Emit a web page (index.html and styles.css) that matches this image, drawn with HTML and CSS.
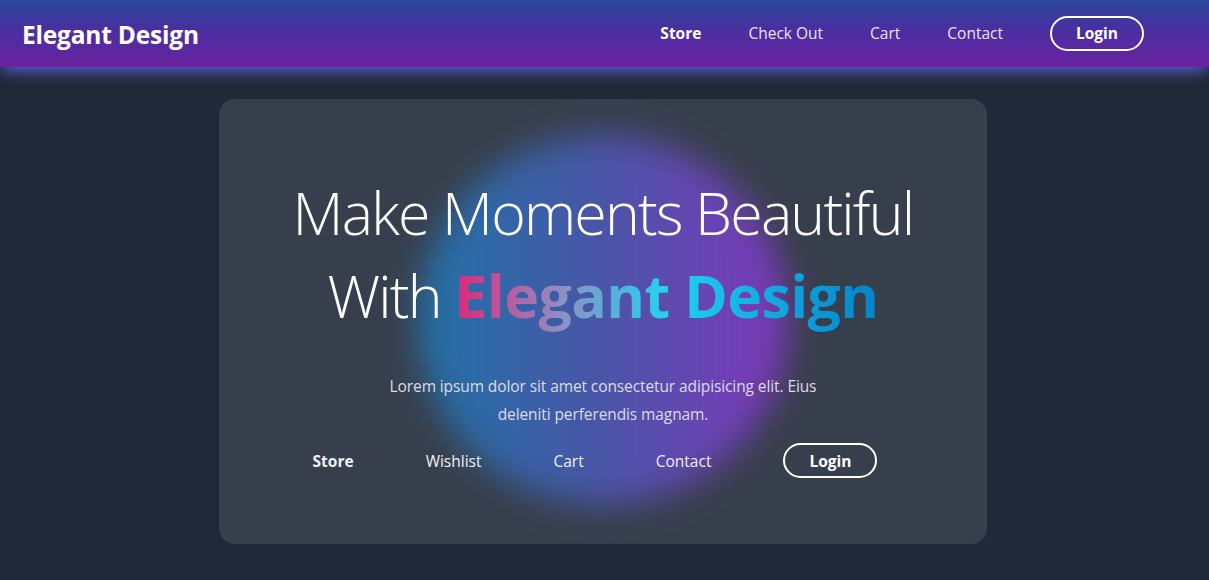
FILE: index.html
```html
<!DOCTYPE html>
<html lang="en">
<head>
<meta charset="utf-8">
<title>Elegant Design</title>
<link rel="stylesheet" href="styles.css">
</head>
<body>
<header class="topbar">
  <div class="brand">Elegant Design</div>
  <nav class="topnav">
    <a class="link active" href="#">Store</a>
    <a class="link" href="#">Check Out</a>
    <a class="link" href="#">Cart</a>
    <a class="link" href="#">Contact</a>
    <a class="btn-login" href="#">Login</a>
  </nav>
</header>
<main class="page">
  <section class="hero">
    <div class="blob"></div>
    <div class="hero-content">
      <h1 class="title">Make Moments Beautiful<br>With <span class="grad">Elegant Design</span></h1>
      <p class="lead">Lorem ipsum dolor sit amet consectetur adipisicing elit. Eius deleniti perferendis magnam.</p>
      <nav class="heronav">
        <a class="link active" href="#">Store</a>
        <a class="link" href="#">Wishlist</a>
        <a class="link" href="#">Cart</a>
        <a class="link" href="#">Contact</a>
        <a class="btn-login" href="#">Login</a>
      </nav>
    </div>
  </section>
</main>
</body>
</html>
```
FILE: styles.css
```css
* { box-sizing: border-box; }
html, body { margin: 0; padding: 0; }
body {
  background: #212837;
  font-family: "Open Sans", "Noto Sans", sans-serif;
  color: #fff;
  height: 580px;
  overflow: hidden;
}
a { text-decoration: none; color: inherit; }

.topbar {
  height: 67px;
  display: flex;
  align-items: center;
  justify-content: space-between;
  padding: 0 65px 1px 22px;
  background: linear-gradient(to bottom, #28489a 0%, #4a2ea0 45%, #6a22a0 100%);
  box-shadow: 0 6px 14px -2px rgba(99, 102, 241, 0.85);
  position: relative;
  z-index: 2;
}
.brand {
  font-size: 24.5px;
  font-weight: 700;
  letter-spacing: -0.2px;
  color: #fff;
  margin-top: 2px;
}
.topnav {
  display: flex;
  align-items: center;
  gap: 47px;
}
.link {
  font-size: 15.5px;
  color: #e9e4f2;
  letter-spacing: 0;
}
.link.active {
  font-weight: 700;
  color: #fff;
}
.btn-login {
  display: flex;
  align-items: center;
  justify-content: center;
  width: 94px;
  height: 35px;
  border: 2px solid #fff;
  border-radius: 18px;
  font-size: 15.5px;
  font-weight: 700;
  color: #fff;
}

.page {
  display: flex;
  justify-content: center;
  padding-top: 32px;
  padding-right: 3px;
}
.hero {
  position: relative;
  width: 768px;
  height: 445px;
  background: #383f4c;
  border-radius: 16px;
  overflow: hidden;
}
.blob {
  position: absolute;
  left: 199px;
  top: 36px;
  width: 370px;
  height: 370px;
  border-radius: 50%;
  background: linear-gradient(to right, #2173a8 0%, #4558a6 45%, #7f37bb 100%);
  filter: blur(17px);
}
.hero-content {
  position: relative;
  display: flex;
  flex-direction: column;
  align-items: center;
  padding-top: 72px;
}
.title {
  margin: 0;
  font-size: 59px;
  font-weight: 300;
  line-height: 83px;
  letter-spacing: -1.8px;
  text-align: center;
  color: #fff;
}
.grad {
  font-weight: 700;
  letter-spacing: -0.6px;
  background: linear-gradient(to right, #e0267a 0%, #8f8ec4 25%, #22d3ee 50%, #12a9e0 75%, #0282c8 100%);
  -webkit-background-clip: text;
  background-clip: text;
  color: transparent;
}
.lead {
  margin: 35px 0 0;
  max-width: 440px;
  font-size: 15.5px;
  line-height: 28px;
  text-align: center;
  color: #dcdbe6;
  letter-spacing: -0.1px;
}
.heronav {
  display: flex;
  align-items: center;
  gap: 72px;
  margin-top: 15px;
  padding-right: 16px;
}
.heronav .link { color: #f1eff6; }
```
